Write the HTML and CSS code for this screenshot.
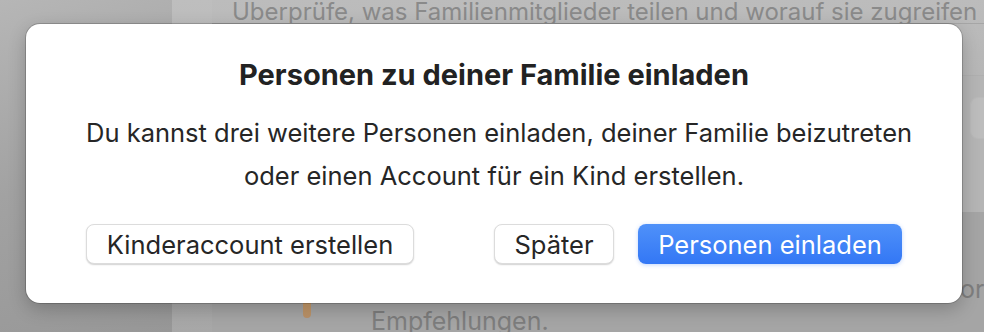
FILE: index.html
```html
<!DOCTYPE html>
<html lang="de">
<head>
    <meta charset="UTF-8">
    <meta name="viewport" content="width=device-width, initial-scale=1.0">
    <title>Familie</title>
    <link rel="stylesheet" href="styles.css">
</head>
<body>
    <div class="window">
        <div class="sidebar"></div>
        <div class="rail"></div>
        <div class="main">
            <div class="intro">Überprüfe, was Familienmitglieder teilen und worauf sie zugreifen können.</div>
            <div class="section">
                <div class="section-box"></div>
            </div>
            <div class="lower">
                <div class="drop"></div>
                <p class="lower-side">Vor</p>
                <p class="lower-text">Empfehlungen.</p>
            </div>
        </div>
    </div>

    <!-- Modal sheet -->
    <div class="dialog">
        <h1>Personen zu deiner Familie einladen</h1>
        <p class="message">Du kannst drei weitere Personen einladen, deiner Familie beizutreten<br>oder einen Account für ein Kind erstellen.</p>
        <div class="actions">
            <button class="btn btn-wide">Kinderaccount erstellen</button>
            <div class="actions-right">
                <button class="btn btn-later">Später</button>
                <button class="btn btn-primary">Personen einladen</button>
            </div>
        </div>
    </div>
</body>
</html>
```

FILE: styles.css
```css
* { margin: 0; padding: 0; box-sizing: border-box; }
body { font-family: Inter, "Noto Sans", sans-serif; width: 984px; height: 332px; overflow: hidden; background: #a9a9a9; }
.window { display: flex; height: 332px; overflow: hidden; }
.sidebar { width: 172px; background: linear-gradient(160deg, #b6b6b6 0%, #a2a2a2 50%, #979797 100%); }
.rail { width: 40px; background: linear-gradient(180deg, #bebebe 0%, #a7a7a7 100%); }
.main { flex: 1; display: flex; flex-direction: column; overflow: hidden; background: linear-gradient(180deg, #bcbcbc 0%, #a4a4a4 100%); }
.intro { height: 24px; padding-left: 20px; font-size: 24px; line-height: 24px; color: #8a8a8a; border-bottom: 1px solid #a6a6a6; white-space: nowrap; overflow: hidden; }
.section { height: 137px; margin-top: 51px; display: flex; justify-content: flex-end; border-top: 1px solid #b0b0b0; background: #b5b5b5; }
.section-box { width: 14px; height: 42px; margin-top: 21px; border-radius: 8px 0 0 8px; background: #bdbdbd; border: 1px solid #b9b9b9; border-right: none; }
.lower { flex: 1; position: relative; background: #a5a5a5; }
.drop { position: absolute; left: 91px; top: 90px; width: 8px; height: 16px; border-radius: 1px 1px 4px 4px; background: linear-gradient(180deg, #c89c6a, #b89068); }
.lower-text { position: absolute; left: 159px; top: 94px; font-size: 25px; line-height: 30px; color: #7d7d7d; }
.lower-side { position: absolute; left: 732px; top: 62px; font-size: 25px; line-height: 30px; color: #7e7e7e; }

.dialog { position: absolute; left: 26px; top: 24px; width: 936px; height: 279px; padding: 34px 60px 0; background: #fff; border-radius: 14px; box-shadow: 0 0 0 1px rgba(0,0,0,0.18), 0 6px 18px rgba(0,0,0,0.22); text-align: center; color: #262626; }
.dialog h1 { font-size: 29px; line-height: 34px; font-weight: 700; color: #222; }
.message { margin-top: 19px; font-size: 25.5px; line-height: 43px; white-space: nowrap; }
.actions { display: flex; justify-content: space-between; margin-top: 27px; }
.actions-right { display: flex; gap: 24px; }
.btn { height: 40px; font-family: inherit; font-size: 25.5px; color: #262626; background: #fff; border: 1px solid #dcdcdc; border-radius: 8px; box-shadow: 0 1px 1.5px rgba(0,0,0,0.18); cursor: pointer; }
.btn-wide { width: 328px; }
.btn-later { width: 120px; }
.btn-primary { width: 264px; color: #fff; border: none; background: linear-gradient(180deg, #4f91f9 0%, #3377f5 100%); box-shadow: 0 1px 4px rgba(52,120,246,0.3); }
```
